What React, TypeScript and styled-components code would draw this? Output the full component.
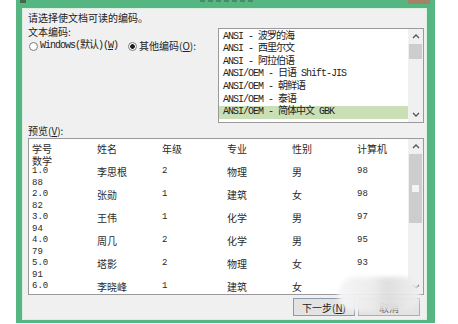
import React from "react";
import styled, { createGlobalStyle } from "styled-components";

const GlobalStyle = createGlobalStyle`
html, body {
  margin: 0;
  padding: 0;
  background: #ffffff;
}
body {
  font-family: "Noto Sans CJK SC", "Noto Sans", sans-serif;
  color: #222;
}
`;

const encodings = [
    "ANSI - 波罗的海",
    "ANSI - 西里尔文",
    "ANSI - 阿拉伯语",
    "ANSI/OEM - 日语 Shift-JIS",
    "ANSI/OEM - 朝鲜语",
    "ANSI/OEM - 泰语",
    "ANSI/OEM - 简体中文 GBK",
];

const header = ["学号", "姓名", "年级", "专业", "性别", "计算机"];

const records = [
    { no: "1.0", math: "88", cells: ["李思根", "2", "物理", "男", "98"] },
    { no: "2.0", math: "82", cells: ["张勋", "1", "建筑", "女", "98"] },
    { no: "3.0", math: "94", cells: ["王伟", "1", "化学", "男", "97"] },
    { no: "4.0", math: "79", cells: ["周几", "2", "化学", "男", "95"] },
    { no: "5.0", math: "91", cells: ["塔影", "2", "物理", "女", "93"] },
    { no: "6.0", math: "", cells: ["李晓峰", "1", "建筑", "女", ""] },
];

const Chevron = ({ up }: { up?: boolean }) => (
    <svg width="8" height="5" viewBox="0 0 8 5">
        <polyline
            points={up ? "1,4 4,1 7,4" : "1,1 4,4 7,1"}
            fill="none"
            stroke="#555"
            strokeWidth="1.3"
        />
    </svg>
);

const App = () => {
    return (
        <Page>
            <GlobalStyle />
            <Window>
                <TitleBar>
                    <AppIcon />
                    <TitleTrace />
                    <CloseBtn />
                </TitleBar>

                <Client>
                    <Label>请选择使文档可读的编码。</Label>

                    <TopRow>
                        <LeftCol>
                            <Label>文本编码:</Label>
                            <RadioRow>
                                <RadioItem>
                                    <Radio />
                                    <MonoText>Windows(默认)(<u>W</u>)</MonoText>
                                </RadioItem>
                                <RadioItem>
                                    <Radio $checked />
                                    <Label>其他编码(<u>O</u>):</Label>
                                </RadioItem>
                            </RadioRow>
                        </LeftCol>

                        <ListBox>
                            <ListItems>
                                {encodings.map((e, i) => (
                                    <ListItem key={e} $selected={i === encodings.length - 1}>
                                        {e}
                                    </ListItem>
                                ))}
                            </ListItems>
                            <ScrollBar>
                                <ArrowBox><Chevron up /></ArrowBox>
                                <Thumb $h={15} />
                                <Track />
                                <ArrowBox><Chevron /></ArrowBox>
                            </ScrollBar>
                        </ListBox>
                    </TopRow>

                    <PreviewLabel>预览(<u>V</u>):</PreviewLabel>

                    <PreviewBox>
                        <Table>
                            <Record>
                                <Cell>学号<br />数学</Cell>
                                {header.slice(1).map((h) => (
                                    <Cell key={h}>{h}</Cell>
                                ))}
                            </Record>
                            {records.map((r) => (
                                <Record key={r.no}>
                                    <Cell $mono>{r.no}<br />{r.math}</Cell>
                                    {r.cells.map((c, i) => (
                                        <Cell key={i} $mono={i === 1 || i === 4}>{c}</Cell>
                                    ))}
                                </Record>
                            ))}
                        </Table>
                        <ScrollBar>
                            <ArrowBox><Chevron up /></ArrowBox>
                            <Thumb $h={69}>
                                <Grip />
                            </Thumb>
                            <Track />
                            <ArrowBox><Chevron /></ArrowBox>
                        </ScrollBar>
                    </PreviewBox>

                    <ButtonRow>
                        <Button $default>下一步(<u>N</u>)</Button>
                        <Button>取消</Button>
                    </ButtonRow>

                    <Smudge />
                </Client>
            </Window>
        </Page>
    );
};

export default App;

const Page = styled.div`
width: 458px;
height: 324px;
padding-left: 16px;
box-sizing: border-box;
overflow: hidden;
`;

const Window = styled.div`
width: 419px;
height: 323px;
background-color: #56b681;
display: flex;
flex-direction: column;
`;

const TitleBar = styled.div`
height: 8px;
display: flex;
align-items: flex-start;
overflow: hidden;
`;

const AppIcon = styled.div`
width: 6px;
height: 3px;
margin-left: 4px;
background-color: #3d6b4c;
`;

/* bottom edge of the cut-off caption */
const TitleTrace = styled.div`
width: 55px;
height: 2px;
margin-left: 174px;
background: repeating-linear-gradient(90deg, #3f7452 0 5px, transparent 5px 8px);
opacity: 0.6;
`;

const CloseBtn = styled.div`
width: 22px;
height: 4px;
margin-left: auto;
margin-right: 5px;
background-color: #c96a5c;
opacity: 0.7;
`;

const Client = styled.div`
position: relative;
flex: 1;
margin: 0 8px 3px 6px;
border: 1px solid #d9efe0;
background-color: #f0f0f0;
padding: 2px 2px 0 5px;
display: flex;
flex-direction: column;
`;

const Label = styled.div`
font-size: 10px;
line-height: 14px;
white-space: nowrap;
`;

const MonoText = styled.span`
font-family: "Liberation Mono", "Noto Sans CJK SC", monospace;
font-size: 10px;
letter-spacing: -1px;
line-height: 14px;
white-space: nowrap;
`;

const TopRow = styled.div`
display: flex;
`;

const LeftCol = styled.div`
width: 190px;
display: flex;
flex-direction: column;
`;

const RadioRow = styled.div`
display: flex;
align-items: center;
gap: 10px;
padding-left: 1px;
`;

const RadioItem = styled.div`
display: flex;
align-items: center;
gap: 2px;
`;

const Radio = styled.div<{ $checked?: boolean }>`
width: 9px;
height: 9px;
border-radius: 50%;
border: 1px solid #7a7a7a;
background-color: #fff;
box-sizing: border-box;
background-image: ${(p) =>
    p.$checked ? "radial-gradient(circle, #1a1a1a 0, #1a1a1a 2px, transparent 2.6px)" : "none"};
`;

const ListBox = styled.div`
margin-top: 3px;
width: 206px;
height: 95px;
box-sizing: border-box;
border: 1px solid #9a9a9a;
background-color: #fff;
display: flex;
overflow: hidden;
`;

const ListItems = styled.div`
flex: 1;
padding-top: 1.7px;
`;

const ListItem = styled.div<{ $selected?: boolean }>`
font-family: "Liberation Mono", "Noto Sans CJK SC", monospace;
font-size: 10px;
letter-spacing: -1px;
line-height: 12.6px;
height: 12.6px;
padding-left: 4px;
white-space: nowrap;
background-color: ${(p) => (p.$selected ? "#cadfb6" : "transparent")};
`;

const ScrollBar = styled.div`
width: 15px;
flex-shrink: 0;
background-color: #f0f0f0;
display: flex;
flex-direction: column;
`;

const ArrowBox = styled.div`
height: 15px;
display: flex;
align-items: center;
justify-content: center;
flex-shrink: 0;
`;

const Thumb = styled.div<{ $h: number }>`
height: ${(p) => p.$h}px;
margin: 0 1px;
background-color: #cdcdcd;
display: flex;
align-items: center;
justify-content: center;
flex-shrink: 0;
`;

const Grip = styled.div`
width: 7px;
height: 7px;
background-color: #f4f4f4;
`;

const Track = styled.div`
flex: 1;
`;

const PreviewLabel = styled(Label)`
margin-top: 1px;
`;

const PreviewBox = styled.div`
width: 396px;
height: 157px;
box-sizing: border-box;
border: 1px solid #9a9a9a;
background-color: #fff;
display: flex;
overflow: hidden;
`;

const Table = styled.div`
flex: 1;
padding: 4px 0 0 3px;
overflow: hidden;
`;

const Record = styled.div`
display: grid;
grid-template-columns: repeat(6, 65px);
height: 23px;
`;

const Cell = styled.div<{ $mono?: boolean }>`
font-family: ${(p) =>
    p.$mono ? `"Liberation Mono", "Noto Sans CJK SC", monospace` : `"Noto Sans CJK SC", sans-serif`};
font-size: ${(p) => (p.$mono ? "9px" : "10px")};
line-height: 11.5px;
white-space: nowrap;
color: #2a2a2a;
`;

const ButtonRow = styled.div`
display: flex;
justify-content: flex-end;
gap: 3px;
margin-top: 3px;
padding-right: 4px;
`;

const Button = styled.div<{ $default?: boolean }>`
width: 62px;
height: 18px;
box-sizing: border-box;
border: 1px solid ${(p) => (p.$default ? "#8a9bb0" : "#adadad")};
background-color: #e3e3e3;
font-size: 10px;
display: flex;
align-items: center;
justify-content: center;
`;

const Smudge = styled.div`
position: absolute;
left: 315px;
top: 268px;
width: 82px;
height: 34px;
border-radius: 17px;
background: linear-gradient(90deg, #f6f6f6 0%, #ededed 40%, #dedede 60%, #f0f0f0 100%);
filter: blur(2px);
opacity: 0.95;
`;
